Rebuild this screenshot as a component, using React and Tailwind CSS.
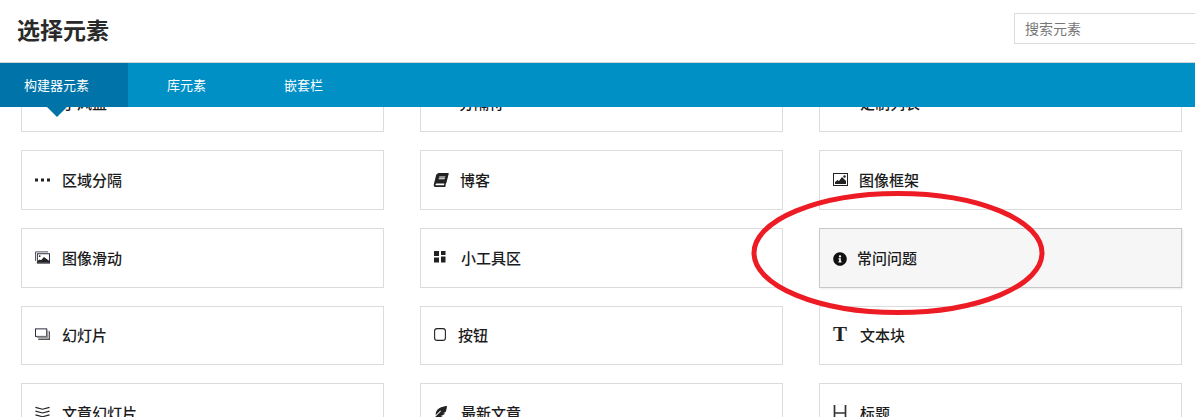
import React from "react";
import { FaBook, FaInfoCircle, FaFeatherAlt, FaMinus } from "react-icons/fa";

const FONT = '"Noto Sans CJK SC","Liberation Sans",sans-serif';

const Dots = () => (
  <svg width="15" height="4" viewBox="0 0 15 4" fill="#222">
    <rect x="0" y="0.500" width="3" height="3" />
    <rect x="6" y="0.500" width="3" height="3" />
    <rect x="12" y="0.500" width="3" height="3" />
  </svg>
);

const ImageFrame = () => (
  <svg width="15" height="13" viewBox="0 0 15 13">
    <rect x="0.500" y="0.500" width="14" height="12" fill="none" stroke="#222" />
    <circle cx="11.500" cy="3.500" r="1.200" fill="#222" />
    <path d="M2 11V9l2.500-2 1.500 1 3-4 4 4v3z" fill="#222" />
  </svg>
);

const ImageSlider = () => (
  <svg width="16" height="13" viewBox="0 0 16 13">
    <path d="M0.500 10V0.500H14" fill="none" stroke="#445" />
    <rect x="2.500" y="2.500" width="13" height="10" fill="none" stroke="#223" />
    <circle cx="5" cy="5" r="1" fill="#222" />
    <path d="M3 12V10l2-1.500 1.500 1 3-3.500 5.500 4v2z" fill="#222" />
  </svg>
);

const Slides = () => (
  <svg width="16" height="13" viewBox="0 0 16 13">
    <rect x="0.500" y="0.500" width="12" height="8" fill="#fff" stroke="#223" />
    <path d="M2 9.500h11.500V2" fill="none" stroke="#999" strokeWidth="1.500" />
    <path d="M3.500 11.500h12V3" fill="none" stroke="#555" strokeWidth="1.500" />
  </svg>
);

const Widgets = () => (
  <svg width="12" height="12" viewBox="0 0 12 12" fill="#222">
    <rect x="0" y="0" width="5" height="5" />
    <rect x="7" y="0" width="4.500" height="4" />
    <rect x="0" y="6.500" width="5" height="5" />
    <rect x="7" y="5.500" width="4.500" height="6" />
  </svg>
);

const ButtonIcon = () => (
  <svg width="12" height="13" viewBox="0 0 12 13" fill="none" stroke="#222" strokeWidth="1.100">
    <rect x="0.600" y="0.600" width="10.800" height="11.800" rx="2.500" />
  </svg>
);

const Chevrons = () => (
  <svg width="16" height="13" viewBox="0 0 16 13" fill="none" stroke="#222" strokeWidth="1.300">
    <path d="M0.500 1l7.500 2 7.500-2" />
    <path d="M0.500 5l7.500 2 7.500-2" />
    <path d="M0.500 9l7.500 2 7.500-2" />
  </svg>
);

const SerifT = () => (
  <span className="text-[21px] font-bold leading-none text-[#222]" style={{ fontFamily: '"Liberation Serif",serif' }}>T</span>
);

const SerifH = () => (
  <svg width="14" height="15" viewBox="0 0 14 15" fill="none" stroke="#333" strokeWidth="1.700">
    <path d="M1.500 0v15M12.500 0v15M1.500 8h11" />
  </svg>
);

const rows = [
  [
    { label: "手风盘", icon: <FaMinus size={15} color="#222" />, gap: "gap-[12px]" },
    { label: "分隔符", icon: <span className="w-[15px]" />, gap: "gap-[10px]" },
    { label: "定制列表", icon: <span className="w-[15px]" />, gap: "gap-[12px]" },
  ],
  [
    { label: "区域分隔", icon: <Dots />, gap: "gap-[12px]" },
    { label: "博客", icon: <FaBook size={14} color="#222" style={{ transform: "skewX(-14deg)" }} />, gap: "gap-[11px]" },
    { label: "图像框架", icon: <ImageFrame />, gap: "gap-[11px]" },
  ],
  [
    { label: "图像滑动", icon: <ImageSlider />, gap: "gap-[12px]" },
    { label: "小工具区", icon: <Widgets />, gap: "gap-[12px]" },
    { label: "常问问题", icon: <FaInfoCircle size={14} color="#111" className="mt-[3px]" />, gap: "gap-[9px]", active: true },
  ],
  [
    { label: "幻灯片", icon: <Slides />, gap: "gap-[12px]" },
    { label: "按钮", icon: <ButtonIcon />, gap: "gap-[9px]" },
    { label: "文本块", icon: <SerifT />, gap: "gap-[12px]" },
  ],
  [
    { label: "文章幻灯片", icon: <Chevrons />, gap: "gap-[12px]" },
    { label: "最新文章", icon: <FaFeatherAlt size={13} color="#222" />, gap: "gap-[12px]" },
    { label: "标题", icon: <SerifH />, gap: "gap-[12px]" },
  ],
];

function Card({ item }) {
  return (
    <div
      className={`flex h-[59.67px] items-center ${item.gap} border pb-[1px] pl-[13px] ${
        item.active
          ? "border-[#c8c8c8] bg-[#f6f6f6] shadow-[1px_1px_2px_rgba(0,0,0,0.08)]"
          : "border-[#dcdcdc] bg-white"
      }`}
    >
      <span className="flex w-[15px] shrink-0 items-center justify-start">{item.icon}</span>
      <span className="text-[15px] font-medium leading-none text-[#1c1c1c]">{item.label}</span>
    </div>
  );
}

export default function App() {
  return (
    <div className="relative h-[417px] w-[1195px] overflow-hidden bg-white" style={{ fontFamily: FONT }}>
      <header className="flex h-[63px] items-start justify-between border-b border-[#d4d4d4] bg-white">
        <h1 className="mt-[14px] ml-[17px] text-[23px] font-bold leading-[30px] text-[#2a2a2a]">选择元素</h1>
        <div className="mt-[13px] flex h-[31px] w-[181px] items-center border border-r-0 border-[#dcdcdc] pl-[10px] text-[14px] text-[#777]">
          搜索元素
        </div>
      </header>

      <nav className="relative z-10 flex h-[44px] bg-[#0090c6] text-[13px] text-white">
        <div className="relative flex w-[128px] items-center bg-[#0074a8] pl-[24px]">
          构建器元素
          <span className="absolute top-full left-[47px] h-0 w-0 border-x-[10px] border-t-[10px] border-x-transparent border-t-[#0074a8]" />
        </div>
        <div className="flex items-center pl-[39px]">库元素</div>
        <div className="flex items-center pl-[78px]">嵌套栏</div>
      </nav>

      <main className="h-[310px] overflow-hidden px-[21px]">
        <div className="mt-[-34.33px] grid grid-cols-[363px_363px_363px] gap-x-[36px] gap-y-[18px]">
          {rows.flat().map((item) => (
            <Card key={item.label} item={item} />
          ))}
        </div>
      </main>

      <svg className="pointer-events-none absolute top-[190px] left-[750px] z-20" width="296" height="126" viewBox="0 0 296 126" fill="none">
        <ellipse cx="148" cy="63" rx="144" ry="59.500" stroke="#ed1c24" strokeWidth="5" />
      </svg>
    </div>
  );
}
